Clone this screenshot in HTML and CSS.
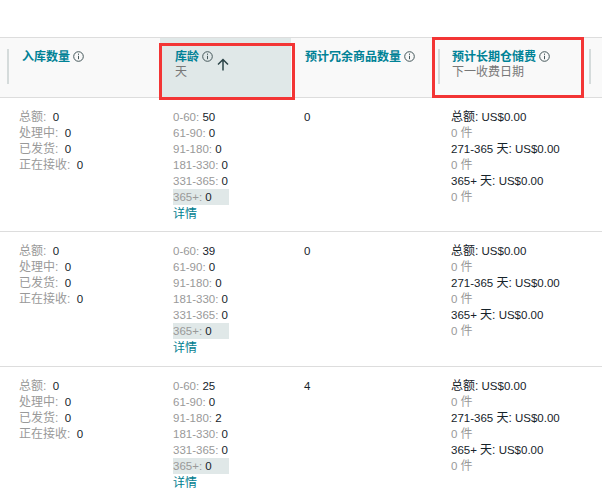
FILE: index.html
```html
<!DOCTYPE html>
<html lang="zh">
<head>
<meta charset="utf-8">
<title>库存</title>
<link rel="stylesheet" href="styles.css">
</head>
<body>
<div class="table">
  <div class="row head">
    <div class="cell c1"><div class="bar"><span class="title">入库数量</span><svg class="info" viewBox="0 0 11 11"><circle cx="5.500" cy="5.500" r="4.800"/><path d="M5.500 4.800v3.400M5.500 2.600v1.200"/></svg></div></div>
    <div class="cell c2 sorted"><div class="inner"><span class="title">库龄</span><svg class="info" viewBox="0 0 11 11"><circle cx="5.500" cy="5.500" r="4.800"/><path d="M5.500 4.800v3.400M5.500 2.600v1.200"/></svg><svg class="arrow" viewBox="0 0 12 13"><path d="M6 12.500V1.500M1 6.500L6 1.500 11 6.500"/></svg><div class="sub">天</div></div></div>
    <div class="cell c3"><div class="inner"><span class="title">预计冗余商品数量</span><svg class="info" viewBox="0 0 11 11"><circle cx="5.500" cy="5.500" r="4.800"/><path d="M5.500 4.800v3.400M5.500 2.600v1.200"/></svg></div></div>
    <div class="cell c4"><div class="bar"><span class="title">预计长期仓储费</span><svg class="info" viewBox="0 0 11 11"><circle cx="5.500" cy="5.500" r="4.800"/><path d="M5.500 4.800v3.400M5.500 2.600v1.200"/></svg><div class="sub">下一收费日期</div></div></div>
    <div class="cell c5"><div class="bar"></div></div>
  </div>

  <div class="row body">
    <div class="cell c1"><div class="k"><span class="zh">总额:</span> &nbsp;<b>0</b></div><div class="k"><span class="zh">处理中:</span> &nbsp;<b>0</b></div><div class="k"><span class="zh">已发货:</span> &nbsp;<b>0</b></div><div class="k"><span class="zh">正在接收:</span> &nbsp;<b>0</b></div></div>
    <div class="cell c2"><div class="age"><div class="k">0-60: <b>50</b></div><div class="k">61-90: <b>0</b></div><div class="k">91-180: <b>0</b></div><div class="k">181-330: <b>0</b></div><div class="k">331-365: <b>0</b></div><div class="k hl">365+: <b>0</b></div><a class="link">详情</a></div></div>
    <div class="cell c3"><b>0</b></div>
    <div class="cell c4"><div><span class="zh">总额:</span> US$0.00</div><div class="k">0 <span class="zh">件</span></div><div>271-365 <span class="zh">天:</span> US$0.00</div><div class="k">0 <span class="zh">件</span></div><div>365+ <span class="zh">天:</span> US$0.00</div><div class="k">0 <span class="zh">件</span></div></div>
  </div>

  <div class="row body">
    <div class="cell c1"><div class="k"><span class="zh">总额:</span> &nbsp;<b>0</b></div><div class="k"><span class="zh">处理中:</span> &nbsp;<b>0</b></div><div class="k"><span class="zh">已发货:</span> &nbsp;<b>0</b></div><div class="k"><span class="zh">正在接收:</span> &nbsp;<b>0</b></div></div>
    <div class="cell c2"><div class="age"><div class="k">0-60: <b>39</b></div><div class="k">61-90: <b>0</b></div><div class="k">91-180: <b>0</b></div><div class="k">181-330: <b>0</b></div><div class="k">331-365: <b>0</b></div><div class="k hl">365+: <b>0</b></div><a class="link">详情</a></div></div>
    <div class="cell c3"><b>0</b></div>
    <div class="cell c4"><div><span class="zh">总额:</span> US$0.00</div><div class="k">0 <span class="zh">件</span></div><div>271-365 <span class="zh">天:</span> US$0.00</div><div class="k">0 <span class="zh">件</span></div><div>365+ <span class="zh">天:</span> US$0.00</div><div class="k">0 <span class="zh">件</span></div></div>
  </div>

  <div class="row body">
    <div class="cell c1"><div class="k"><span class="zh">总额:</span> &nbsp;<b>0</b></div><div class="k"><span class="zh">处理中:</span> &nbsp;<b>0</b></div><div class="k"><span class="zh">已发货:</span> &nbsp;<b>0</b></div><div class="k"><span class="zh">正在接收:</span> &nbsp;<b>0</b></div></div>
    <div class="cell c2"><div class="age"><div class="k">0-60: <b>25</b></div><div class="k">61-90: <b>0</b></div><div class="k">91-180: <b>2</b></div><div class="k">181-330: <b>0</b></div><div class="k">331-365: <b>0</b></div><div class="k hl">365+: <b>0</b></div><a class="link">详情</a></div></div>
    <div class="cell c3"><b>4</b></div>
    <div class="cell c4"><div><span class="zh">总额:</span> US$0.00</div><div class="k">0 <span class="zh">件</span></div><div>271-365 <span class="zh">天:</span> US$0.00</div><div class="k">0 <span class="zh">件</span></div><div>365+ <span class="zh">天:</span> US$0.00</div><div class="k">0 <span class="zh">件</span></div></div>
  </div>
  <div class="mark mark-age"></div>
  <div class="mark mark-fee"></div>
</div>
</body>
</html>
```
FILE: styles.css
```css
html, body {
  margin: 0;
  padding: 0;
  background: #fff;
}
body {
  width: 602px;
  height: 488px;
  overflow: hidden;
  font-family: "Liberation Sans", "Noto Sans CJK SC", sans-serif;
  font-size: 11.5px;
  line-height: 16px;
  color: #16232a;
}
.table {
  position: relative;
  padding-top: 37px;
}
.row {
  display: grid;
  grid-template-columns: 160px 131px 147px 151px 13px;
}
.head {
  height: 59px;
  background: #f9f9f9;
  border-top: 1px solid #ddd;
  border-bottom: 1px solid #ddd;
  font-size: 12px;
}
.body {
  height: 134px;
  border-bottom: 1px solid #ddd;
}
.body:nth-child(2) {
  height: 133px;
}
.body:last-of-type {
  border-bottom: 0;
}
.head .cell {
  padding-top: 11px;
}
.head .c1 {
  padding-left: 7px;
}
.head .c2 {
  padding-left: 15px;
}
.head .c3 {
  padding-left: 14px;
}
.inner {
  position: relative;
}
.bar {
  height: 35px;
  border-left: 2px solid #d5dbdb;
}
.c1 .bar {
  padding-left: 13px;
}
.c4 .bar {
  padding-left: 12px;
}
.sorted {
  background: #e0e8e8;
}
.title {
  font-weight: 700;
  color: #008296;
}
.sub {
  margin-top: -1px;
  color: #777;
}
.info {
  width: 11px;
  height: 11px;
  margin-left: 3px;
  vertical-align: -1px;
  fill: none;
  stroke: #44575a;
  stroke-width: 1;
}
.arrow {
  position: absolute;
  left: 42px;
  top: 9px;
  width: 12px;
  height: 13px;
  fill: none;
  stroke: #2c4548;
  stroke-width: 1.500;
}
.body .cell {
  padding-top: 11px;
}
.body .c1 {
  padding-left: 19px;
}
.body .c2 {
  padding-left: 13px;
}
.age {
  width: 56px;
  white-space: nowrap;
}
.body .c3 {
  padding-left: 13px;
}
.body .c4 {
  padding-left: 13px;
  grid-column: 4 / span 2;
  white-space: nowrap;
}
.zh {
  font-size: 12px;
}
.k {
  color: #999;
}
b {
  font-weight: 400;
  color: #16232a;
}
.hl {
  background: #e0e8e8;
}
.link {
  display: block;
  padding-top: 1px;
  font-size: 12px;
  color: #007d8f;
}
.mark {
  position: absolute;
  border: 3px solid #f33535;
  box-sizing: border-box;
}
.mark-age {
  left: 159px;
  top: 43px;
  width: 136px;
  height: 57px;
}
.mark-fee {
  left: 432px;
  top: 37px;
  width: 152px;
  height: 61px;
}
```
